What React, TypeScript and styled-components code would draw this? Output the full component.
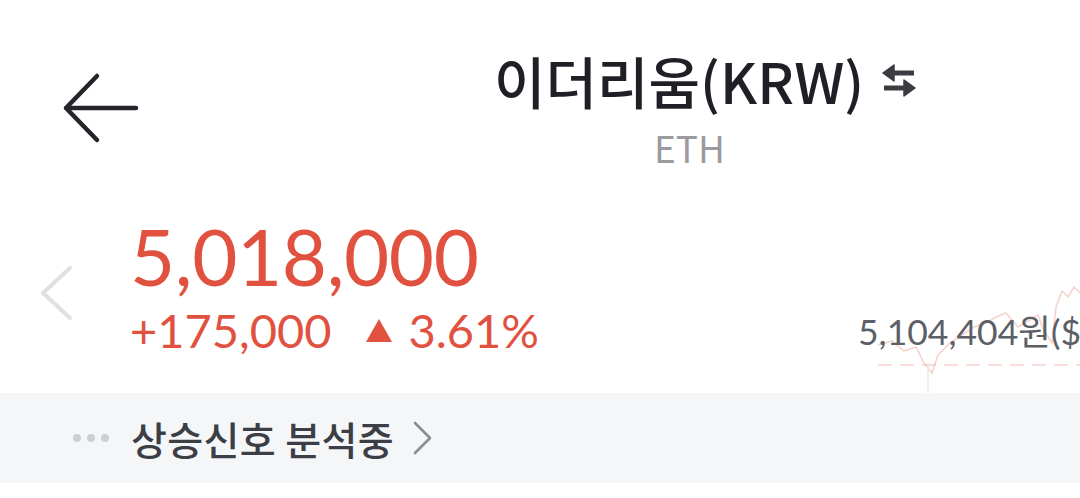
import React from "react";
import styled, { createGlobalStyle } from "styled-components";

const GlobalStyle = createGlobalStyle`
  html, body { margin: 0; padding: 0; background: #ffffff; }
  body { overflow: hidden; }
  * { box-sizing: border-box; }
`;

const KR = `"Noto Sans CJK KR", "Noto Sans", sans-serif`;
const NUM = `Lato, "Noto Sans CJK KR", sans-serif`;

const Page = styled.div`
  width: 1080px;
  height: 498px;
  overflow: hidden;
  background: #ffffff;
  display: flex;
  flex-direction: column;
`;

const Header = styled.header`
  height: 195px;
  display: flex;
  align-items: flex-start;
`;

const BackButton = styled.button`
  margin: 72px 0 0 62px;
  width: 78px;
  height: 72px;
  padding: 0;
  border: 0;
  background: none;
  display: flex;
  align-items: center;
  justify-content: center;
`;

const TitleBlock = styled.div`
  margin: 42px 0 0 354px;
  display: flex;
  flex-direction: column;
  align-items: flex-start;
`;

const TitleRow = styled.div`
  display: flex;
  align-items: center;
  gap: 18px;
`;

const Title = styled.h1`
  margin: 0;
  font-family: ${KR};
  font-weight: 500;
  font-size: 56px;
  line-height: 76px;
  color: #1e2026;
`;

const Symbol = styled.div`
  margin: 7px 0 0 160px;
  font-family: ${KR};
  font-size: 37px;
  line-height: 44px;
  color: #9a9b9f;
`;

const PriceSection = styled.section`
  height: 198px;
  display: flex;
  align-items: flex-start;
`;

const PrevButton = styled.div`
  margin: 70px 0 0 38px;
  width: 36px;
  height: 56px;
`;

const PriceBlock = styled.div`
  margin: 16px 0 0 56px;
  display: flex;
  flex-direction: column;
  color: #e0523f;
  font-family: ${NUM};
`;

const Price = styled.div`
  font-size: 78px;
  line-height: 90px;
  font-weight: 400;
  letter-spacing: -0.4px;
`;

const ChangeRow = styled.div`
  margin-top: 2px;
  display: flex;
  align-items: center;
  font-size: 47px;
  line-height: 54px;
`;

const Triangle = styled.span`
  margin: 0 17px 0 34px;
  width: 0;
  height: 0;
  border-left: 13px solid transparent;
  border-right: 13px solid transparent;
  border-bottom: 23px solid #e0523f;
`;

const SidePanel = styled.div`
  margin-left: auto;
  width: 222px;
  height: 198px;
  position: relative;
  overflow: hidden;
`;

const ChartLayer = styled.svg`
  position: absolute;
  left: 0;
  top: 0;
`;

const SideValue = styled.div`
  position: relative;
  margin-top: 115px;
  white-space: nowrap;
  font-family: ${NUM};
  font-size: 35.5px;
  line-height: 44px;
  color: #5c5f66;
`;

const SignalBar = styled.div`
  height: 90px;
  background: #f5f6f8;
  display: flex;
  align-items: center;
  padding-left: 73px;
`;

const Dots = styled.div`
  display: flex;
  gap: 6px;
  margin-right: 22px;
`;

const Dot = styled.span`
  width: 8px;
  height: 8px;
  border-radius: 50%;
  background: #cdcfd3;
`;

const SignalText = styled.span`
  font-family: ${KR};
  font-size: 39px;
  line-height: 50px;
  font-weight: 500;
  color: #3b3e45;
  letter-spacing: 0.4px;
`;

const SignalChevron = styled.svg`
  margin-left: 18px;
`;

const ArrowLeftIcon = () => (
  <svg width="78" height="72" viewBox="0 0 78 72">
    <path
      d="M35 4 L4 36 L35 68 M4 36 H74"
      fill="none"
      stroke="#23252b"
      strokeWidth="4.5"
      strokeLinecap="round"
      strokeLinejoin="round"
    />
  </svg>
);

const SwapIcon = () => (
  <svg width="34" height="36" viewBox="0 0 34 36">
    <path d="M1 11 L12 3 V19 Z" fill="#3a3c42" strokeLinejoin="round" stroke="#3a3c42" strokeWidth="1.5" />
    <path d="M10 8.5 H32 V13.5 H10 Z" fill="#3a3c42" />
    <path d="M33 26 L22 18 V34 Z" fill="#3a3c42" strokeLinejoin="round" stroke="#3a3c42" strokeWidth="1.5" />
    <path d="M2 23.5 H24 V28.5 H2 Z" fill="#3a3c42" />
  </svg>
);

const PrevIcon = () => (
  <svg width="36" height="56" viewBox="0 0 36 56">
    <path
      d="M32 3 L5 28 L32 53"
      fill="none"
      stroke="#dfe0e2"
      strokeWidth="4"
      strokeLinecap="round"
      strokeLinejoin="round"
    />
  </svg>
);

const MiniChart = () => (
  <ChartLayer width="222" height="198" viewBox="0 0 222 198">
    <line x1="20" y1="170" x2="222" y2="170" stroke="#f2c9c2" strokeWidth="2" strokeDasharray="14 8" opacity="0.6" />
    <polyline
      points="20,150 34,146 46,156 58,152 66,168 74,178 80,160 92,148 104,140 116,132 128,128 138,122 148,118 160,132 170,126 180,120 186,136 194,148 198,112 204,96 210,102 216,92 222,98"
      fill="none"
      stroke="#f0b6ad"
      strokeWidth="1.6"
      opacity="0.6"
    />
    <line x1="70" y1="168" x2="70" y2="198" stroke="#e8e9eb" strokeWidth="1.5" />
  </ChartLayer>
);

export default function App() {
  return (
    <Page>
      <GlobalStyle />
      <Header>
        <BackButton aria-label="뒤로">
          <ArrowLeftIcon />
        </BackButton>
        <TitleBlock>
          <TitleRow>
            <Title>이더리움(KRW)</Title>
            <SwapIcon />
          </TitleRow>
          <Symbol>ETH</Symbol>
        </TitleBlock>
      </Header>
      <PriceSection>
        <PrevButton>
          <PrevIcon />
        </PrevButton>
        <PriceBlock>
          <Price>5,018,000</Price>
          <ChangeRow>
            <span>+175,000</span>
            <Triangle />
            <span>3.61%</span>
          </ChangeRow>
        </PriceBlock>
        <SidePanel>
          <MiniChart />
          <SideValue>5,104,404원($</SideValue>
        </SidePanel>
      </PriceSection>
      <SignalBar>
        <Dots>
          <Dot />
          <Dot />
          <Dot />
        </Dots>
        <SignalText>상승신호 분석중</SignalText>
        <SignalChevron width="22" height="34" viewBox="0 0 22 34">
          <path d="M3 2 L18 17 L3 32" fill="none" stroke="#8a8c91" strokeWidth="2.6" strokeLinecap="round" strokeLinejoin="round" />
        </SignalChevron>
      </SignalBar>
    </Page>
  );
}
